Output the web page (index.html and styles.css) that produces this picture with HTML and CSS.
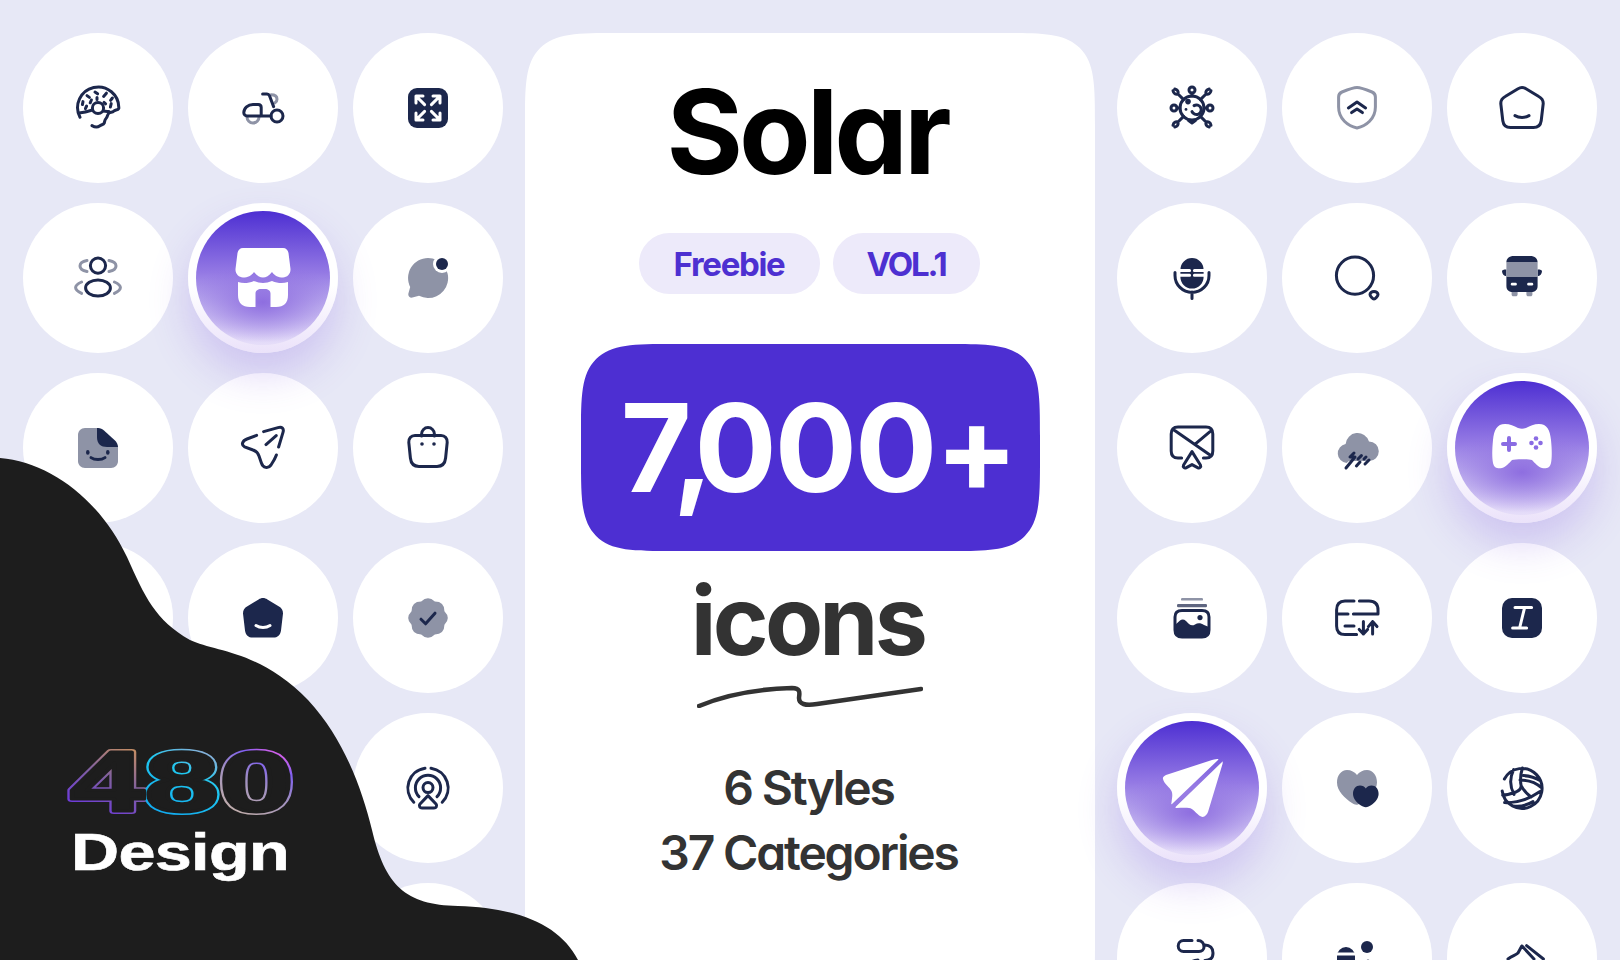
FILE: index.html
```html
<!DOCTYPE html>
<html lang="en">
<head>
<meta charset="utf-8">
<title>Solar icons</title>
<link rel="stylesheet" href="styles.css">
</head>
<body>
<main class="page">
  <section class="grid">
    <div class="cell"><svg class="ic" viewBox="0 0 24 24"><path class="s" d="M3 16.600A10.300 10.300 0 1 1 22.400 12.200c-.6 1-1.800.6-2.600 1.400-.7.8-1.600.2-2.400 1-.9.9-.4 1.600-1.300 2.500-.8.8-.7 1.500-1 2.500-.4.900-1.500.6-2.300 1.400-1 .7-2.600.5-3.800-.2"/><circle class="s" cx="12" cy="12" r="2.800"/><path class="s" d="M2.500 14.500c2-.2 4-.6 6.700-1.500M14.800 13.500c1 .3 1.700.2 2.700.2M10.500 4l1.300.9M16.200 4.600 14.800 6.200M6.500 5.800l1.200.9M4.500 8.800 4.200 10.300M8.700 8l-.6 1.400M19.200 7 18.300 8.200M18.200 11.500l.4-1.700M6.300 11 5.700 12.300M15 9.200l.8.7M11.500 6.800v1"/></svg></div>
    <div class="cell"><svg class="ic" viewBox="0 0 24 24"><path class="g" d="M4 16.500a3 3 0 0 0 6 0M16 5.400c2 0 3 1 3 2.200 0 .8-.4 1.400-1 1.800"/><path class="s" d="M16 16H4a1.600 1.600 0 0 1-1.600-1.600C2.400 12 4.500 10.200 7 10.200h2.600c1 0 1.500.5 1.500 1.500V16M11.800 5H14c.7 0 1 .3 1.300 1l2 5.300"/><circle class="s" cx="19" cy="16" r="3"/></svg></div>
    <div class="cell"><svg class="ic" viewBox="0 0 24 24"><rect class="f" x="2" y="2" width="20" height="20" rx="4.500"/><path class="w" d="M6 9.500V6h3.500M6 6l4.300 4.300M18 9.500V6h-3.500M18 6l-4.300 4.300M6 14.500V18h3.500M6 18l4.300-4.300M18 14.500V18h-3.500M18 18l-4.300-4.300"/></svg></div>

    <div class="cell"><svg class="ic" viewBox="0 0 24 24"><path class="g" d="M6.500 3.300C4.300 3.700 3 4.800 3 6s1.300 2.300 3.500 2.700M17.500 3.300C19.700 3.700 21 4.800 21 6s-1.300 2.300-3.500 2.700M3.800 14C2 14.800.8 15.700.8 16.800s1.200 2.100 3 2.900M20.200 14c1.800.8 3 1.700 3 2.800s-1.200 2.100-3 2.900"/><circle class="s" cx="12" cy="5.800" r="3.800"/><ellipse class="s" cx="12" cy="17" rx="6.200" ry="4"/></svg></div>
    <div class="cell hot"><div class="orb"><svg class="ic-lg" viewBox="-32 -32 64 64"><path class="wf" d="M-20-30H20C23-30 25-28 25.500-25L27.500-9C27.800-4 24-.5 20-.5 15-.5 12-2 9-6 6-2 3-.5 0-.5S-6-2-9-6C-12-2-15-.5-20-.5-24-.5-27.800-4-27.500-9L-25.500-25C-25-28-23-30-20-30Z"/><path class="wf" d="M-25 4C-20 5.500-15 5.500-9 3-3 5.500 3 5.500 9 3 15 5.500 20 5.500 25 4V17C25 25 21 29 13 29H7.500V15.500C7.500 12.500 5 11 2 11H-2C-5 11-7.500 12.500-7.500 15.500V29H-13C-21 29-25 25-25 17Z"/></svg></div></div>
    <div class="cell"><svg class="ic" viewBox="0 0 24 24"><path class="fg" d="M12 2a10 10 0 1 1-4.500 18.900l-3.300.9c-1.200.3-2.300-.8-2-2l.9-3.300A10 10 0 0 1 12 2Z"/><circle class="wf" cx="19" cy="5" r="4.500"/><circle class="f" cx="19" cy="5" r="3"/></svg></div>

    <div class="cell"><svg class="ic" viewBox="0 0 24 24"><path class="fg" d="M5.500 2H12l10 9.500V18.500C22 20.500 20.500 22 18.500 22H5.500C3.500 22 2 20.500 2 18.500V5.500C2 3.500 3.500 2 5.500 2Z"/><path class="f" d="M11.500 2H12C13.200 2 14.200 2.500 15 3.200L20.500 8.200C21.300 9 22 10.200 22 11.500H16.500C13.500 11.500 11.500 10 11.500 6.500Z"/><ellipse class="f" cx="6.900" cy="14.200" rx=".9" ry="1.200"/><ellipse class="f" cx="16.900" cy="14.200" rx=".9" ry="1.200"/><path class="s" d="M8.500 16.800c1.800 1.300 5.200 1.300 7 0"/></svg></div>
    <div class="cell"><svg class="ic" viewBox="0 0 24 24"><path class="s" d="M8.800 5.700 4 7.500C1.500 8.500 1 10.500 2.800 11.400L7 13C8.800 13.600 9.500 14.500 10 16L11.200 19.500C12 22 14.500 22.500 16 20.500 17 19 18 17.500 18.700 15.500M12.300 3.800 19.500 1.800C21.500 1.200 22.600 2.200 22 4.200L19.800 11.500M13.500 10.300 18.600 5.800"/></svg></div>
    <div class="cell"><svg class="ic" viewBox="0 0 24 24"><path class="s" d="M8.800 6V5a3.200 3.200 0 0 1 6.400 0v1M5.500 5.700H18.500C20.500 5.700 21.800 7.200 21.600 9.200L20.800 17C20.500 20 18.700 21.200 16.500 21.200H7.500C5.300 21.200 3.500 20 3.200 17L2.400 9.200C2.200 7.200 3.500 5.700 5.500 5.700Z"/><circle class="f" cx="9" cy="10" r=".9"/><circle class="f" cx="15" cy="10" r=".9"/></svg></div>

    <div class="cell"></div>
    <div class="cell"><svg class="ic" viewBox="0 0 24 24"><path class="f" d="M12 2c.8 0 1.500.3 2.200.7l5.800 3.500c1.400.8 2 2 2 3.500l-1 8.500c-.3 2.200-1.700 3.600-3.900 3.600H6.900c-2.200 0-3.600-1.400-3.900-3.600L2 9.700c0-1.500.6-2.700 2-3.500l5.800-3.500C10.500 2.300 11.200 2 12 2Z"/><path class="w" d="M8.500 15.800c2 1.300 5 1.300 7 0"/></svg></div>
    <div class="cell"><svg class="ic" viewBox="0 0 24 24"><path class="fg" d="M20.220 8.590Q23.600 12 20.220 15.410 20.200 20.200 15.410 20.220 12 23.600 8.590 20.220 3.800 20.200 3.780 15.410 .4 12 3.780 8.590 3.800 3.800 8.590 3.780 12 .4 15.410 3.780 20.200 3.800 20.220 8.590Z"/><path class="s" d="M8.500 12.600l2.300 2.300 4.700-5.300"/></svg></div>

    <div class="cell"></div>
    <div class="cell"></div>
    <div class="cell"><svg class="ic" viewBox="0 0 24 24"><circle class="s" cx="12" cy="11.800" r="2.500"/><path class="s" d="M12 15.800 8 20c-.8 1 0 2 1 2h6c1 0 1.800-1 1-2ZM4.900 19.100A10 10 0 0 1 10.500 2.100M13.500 2.100A10 10 0 0 1 19.100 19.100M7.500 16.300A6.300 6.300 0 1 1 16.500 16.300"/></svg></div>

    <div class="cell"></div>
    <div class="cell"></div>
    <div class="cell"></div>
  </section>

  <section class="card">
    <h1 class="title">Solar</h1>
    <div class="pills"><span class="pill pill-a">Freebie</span><span class="pill pill-b">VOL.1</span></div>
    <div class="count"><span class="seven">7</span><span class="comma">,</span><span>000+</span></div>
    <div class="icons">icons</div>
    <svg class="squiggle" viewBox="0 0 226 24"><path d="M2 22C30 10 60 5 95 4c10 0 7 7 7 10 0 6 6 8 18 6 35-5 70-10 104-15"/></svg>
    <p class="stats">6 Styles</p>
    <p class="stats">37 Categories</p>
  </section>

  <section class="grid">
    <div class="cell"><svg class="ic" viewBox="0 0 24 24"><circle class="s" cx="12" cy="12" r="6"/><circle class="s" cx="12" cy="3" r="1.500"/><circle class="s" cx="3" cy="12" r="1.500"/><circle class="s" cx="21" cy="12" r="1.500"/><path class="s" d="M12 4.500V6M4.500 12H6M18 12h1.500M7.800 7.800 5 5C5.300 3.800 4.800 2.800 3.400 2.500M5 5C3.800 5.300 2.800 4.800 2.500 3.400M16.200 7.800 19 5C18.700 3.800 19.200 2.800 20.600 2.500M19 5C20.200 5.300 21.200 4.800 21.500 3.400M7.800 16.200 5 19C3.800 18.700 2.800 19.200 2.500 20.600M5 19C5.300 20.200 4.800 21.200 3.400 21.500M16.200 16.200 19 19C20.200 18.700 21.200 19.200 21.500 20.600M19 19C18.700 20.200 19.200 21.200 20.600 21.500M10.300 18.300 12 19.500l1.700-1.200"/><circle class="f" cx="10" cy="8.800" r="1.400"/><circle class="f" cx="9" cy="12.700" r=".7"/><path class="s" d="M13 10.800a2.400 2.400 0 1 1-1 3"/></svg></div>
    <div class="cell"><svg class="ic" viewBox="0 0 24 24"><path class="g" d="M12 1.800C13 1.800 17 3 19.500 4 20.700 4.500 21.200 5.200 21.200 6.500V11.500C21.200 17.500 16.500 21 12 22 7.500 21 2.800 17.500 2.800 11.500V6.500C2.800 5.200 3.300 4.500 4.500 4 7 3 11 1.800 12 1.800Z"/><path class="s" d="M7.700 12 12 9l4.300 3M9.300 14.300 12 12.500l2.700 1.800"/></svg></div>
    <div class="cell"><svg class="ic" viewBox="0 0 24 24"><path class="s" d="M12 1.800c.8 0 1.500.3 2.200.7l6 3.600c1.500.8 2.500 2 2.400 3.800l-1 8.500c-.3 2.200-1.700 3.400-3.900 3.400H6.300c-2.200 0-3.600-1.200-3.900-3.400l-1-8.500c-.1-1.800.9-3 2.400-3.800l6-3.600C10.500 2.100 11.200 1.800 12 1.800Z"/><path class="s" d="M8.500 15.800c2 1.200 5 1.200 7 0"/></svg></div>

    <div class="cell"><svg class="ic" viewBox="0 0 24 24"><path class="f" d="M12 2a5.800 5.800 0 0 1 5.800 5.800v3.700a5.800 5.800 0 0 1-11.600 0V7.800A5.800 5.800 0 0 1 12 2Z"/><path class="w" d="M6 8.300h4.800M13.200 8.300h4.800M6 10.600h4.800M13.200 10.600h4.800"/><path class="s" d="M3.500 9.300v1.400a8.500 8.500 0 0 0 17 0V9.300M12 19v3.200"/></svg></div>
    <div class="cell"><svg class="ic" viewBox="0 0 24 24"><circle class="s" cx="11" cy="10.800" r="9.300"/><path class="s" d="M20.500 18.800c1.200 0 2 .7 2 1.500 0 .7-1.300 2.200-2 2.200s-2-1.500-2-2.200c0-.8.800-1.500 2-1.500Z"/></svg></div>
    <div class="cell"><svg class="ic" viewBox="0 0 24 24"><path class="fg" d="M6.800 19h3v1.200c0 .5-.4.9-.9.900H7.700c-.5 0-.9-.4-.9-.9ZM14.200 19h3v1.200c0 .5-.4.9-.9.900h-1.200c-.5 0-.9-.4-.9-.9Z"/><path class="f" d="M4.200 4.300C4.200 2.200 5.500 1 8 1h8c2.500 0 3.800 1.200 3.800 3.300ZM4.200 11.300h15.600V16c0 2-1.300 3-3.300 3h-9c-2 0-3.300-1-3.300-3ZM2 8.500c0-.5.700-.8 2.200-.8v3.400C3 11 2 10 2 8.500ZM22 8.500c0-.5-.7-.8-2.200-.8v3.400C21 11 22 10 22 8.500Z"/><rect class="fg" x="4.200" y="4.300" width="15.600" height="7"/><rect class="wf" x="6.400" y="14.400" width="3" height="1.300" rx=".6"/><rect class="wf" x="14.600" y="14.400" width="3" height="1.300" rx=".6"/></svg></div>

    <div class="cell"><svg class="ic" viewBox="0 0 24 24"><path class="s" d="M6.800 17H5C2.800 17 1.600 15.800 1.600 13.500V5C1.600 2.700 2.800 1.500 5 1.500H19C21.200 1.500 22.400 2.700 22.400 5V13.500C22.400 15.800 21.200 17 19 17H17.700M3 3 21 15.500M21 3.800 14 9.700M12 13.800 7.800 20.500C7.300 21.500 8.200 22.300 9.200 21.800L12 20.300 14.800 21.800C15.800 22.300 16.700 21.500 16.200 20.500Z"/></svg></div>
    <div class="cell"><svg class="ic" viewBox="0 0 24 24"><path class="fg" d="M6.800 19.500A4.800 4.800 0 0 1 6.300 10 6 6 0 0 1 18 8.700 4.900 4.900 0 0 1 18 18.500H8Z"/><path class="s" d="M10.500 14.500 8.500 16.500H11L6.500 22M14.200 15.800 12.500 17.500M13.500 19 11.700 21M18 18 16 20M16.500 16.500l-1 1"/></svg></div>
    <div class="cell hot"><div class="orb"><svg class="ic-lg" viewBox="-32 -32 64 64"><path class="wf" d="M-17-24C-12-24-8-22-4-20-1-19 1-19 4-20 8-22 12-24 17-24 25-24 28-18 29-8 30 2 30 10 29 15 28 20 24 21 20 20 16 19 13 15 10 12 7 11-7 11-10 12-13 15-16 19-20 20-24 21-28 20-29 15-30 10-30 2-29-8-28-18-25-24-17-24Z"/><path class="pur" d="M-19-4H-7M-13-10V2"/><circle class="purf" cx="14" cy="-9.500" r="2.300"/><circle class="purf" cx="14" cy="-.5" r="2.300"/><circle class="purf" cx="9.500" cy="-5" r="2.300"/><circle class="purf" cx="18.500" cy="-5" r="2.300"/></svg></div></div>

    <div class="cell"><svg class="ic" viewBox="0 0 24 24"><rect class="fg" x="6.500" y="2" width="11" height="1.300" rx=".6"/><rect class="fm" x="4.500" y="5" width="15" height="1.600" rx=".6"/><path class="f" d="M3.500 15.500 6 13.300C7 12.500 8 12.700 9 13.500L10.500 15C11.500 15.800 12.500 15.800 13.500 15.200 15 14.300 16.500 14.500 18 15.500L20.500 16.500V18C20.500 20.500 19.500 21.800 17 21.800H7C4.500 21.800 3.500 20.500 3.500 18Z"/><path class="s" d="M7 8.300H17C19.300 8.300 20.500 9.500 20.500 11.500V18C20.500 20.500 19.300 21.500 17 21.500H7C4.700 21.500 3.500 20.500 3.500 18V11.500C3.500 9.500 4.700 8.300 7 8.300Z"/><circle class="f" cx="16" cy="11.800" r="1.300"/></svg></div>
    <div class="cell"><svg class="ic" viewBox="0 0 24 24"><path class="s" d="M10.500 3.500H6C3.300 3.500 1.800 5 1.800 8V16C1.800 18.800 3.300 20.300 6 20.300H11.800M13.200 3.500H18C20.800 3.500 22.500 5 22.500 8V10H10.200M1.800 10H7.500M6 16H10.500M15.200 13.800V20M13.100 17.700 15.200 20 17.300 17.700M19.800 20V13.800M17.700 16.300 19.800 13.800 22 16.300"/></svg></div>
    <div class="cell"><svg class="ic" viewBox="0 0 24 24"><rect class="f" x="2" y="2" width="20" height="20" rx="5"/><path class="w" d="M8.500 6.800H16.800M7.300 17H14.300M13.300 6.800 10.800 17"/></svg></div>

    <div class="cell hot"><div class="orb"><svg class="ic-lg" viewBox="-32 -32 64 64"><path class="wf" d="M26-29C27-29 26-28 25.500-27.500L-20 16C-20.500 16.500-21 16-20.500 14.500-20 10-19 6-20.500 3-22-.5-28-4-29-9-29.500-11-28-12-26-13L20-28C23-29 25-29 26-29Z"/><path class="wf" d="M30-26C30.500-27 31-26 30.500-24L16 24C15 27 12 30 9 28.500 4 26 1 20-3 20-7 19.500-11 20-15.500 20-17 20-16.500 19-16 18.500L29-25C29.500-25.500 29.700-25.700 30-26Z"/></svg></div></div>
    <div class="cell"><svg class="ic" viewBox="0 0 24 24"><path class="fg" d="M2 9.200C2 5.800 4 3 7 3 9 3 11 4 12 5.500 13 4 15 3 17 3 20 3 22 5.800 22 9.200 22 13 18 17 14 19.500 12 20.800 11 20.500 9.500 19.500 6 17 2 13.500 2 9.200Z"/><path class="f" d="M10 15C10 12.500 11.500 10.800 13.500 10.800 14.800 10.800 15.800 11.400 16.400 12.200 17 11.400 18 10.800 19.300 10.800 21.300 10.800 22.800 12.500 22.800 15 22.800 17.500 20.500 20 17.800 21.300 16.800 21.800 16 21.800 15 21.300 12.300 20 10 17.500 10 15Z"/></svg></div>
    <div class="cell"><svg class="ic" viewBox="0 0 24 24"><path class="s" d="M3.200 7.500A10 10 0 1 1 2.100 13.500M7.800 2.800C5.800 7 6 11.500 8 15.200M12.200 2C11.300 5 11 8 11.500 10.500 11.800 12 10.700 13.200 9 14 6.500 15 4.300 15.500 2.300 15.500M12.800 5.800C16 6 19 7 21.200 8.300M11 8C15 8 19.300 9.500 21.900 12M3.300 19.300C9 19.500 15 18 21 13.800M7.500 21C11 21.500 15 20.300 17.500 18.800M11.800 11.200C13 13.500 14.500 15 16.500 16.500"/></svg></div>

    <div class="cell"><svg class="ic" viewBox="0 0 24 24"><path class="s" d="M12 3.300H7.800A2.700 2.700 0 0 0 7.800 8.700H15.500C17 8.700 18 7.800 18 6.500 18 4.500 16.800 3.300 15 3.300M18 5.500H18.500C21 5.500 22.500 7 22.500 9.500 22.500 12 21 13.200 18.500 13.200M12 13.800C13 13.200 14 13 15 13"/></svg></div>
    <div class="cell"><svg class="ic" viewBox="0 0 24 24"><circle class="f" cx="17" cy="6.500" r="3"/><path class="f" d="M2 11a4.500 4.500 0 0 1 9 0V15H2Z"/><path class="w" d="M2 10h9"/><circle class="f" cx="17.500" cy="13.800" r="1"/></svg></div>
    <div class="cell"><svg class="ic" viewBox="0 0 24 24"><path class="s" d="M5 12.500C7 11 9 10.500 10 9.500L11.900 6M12 6 18 12.500M14.300 5.800 22.700 12.500"/></svg></div>
  </section>
</main>

<aside class="brand">
  <svg class="blob" viewBox="0 0 600 520"><path class="blob-fill" d="M0 18C50 22 100 60 127 117 145 157 155 180 190 200 215 212 260 210 308 260 345 300 362 350 372 390 385 445 405 465 458 466 520 468 560 485 578 520H0Z"/></svg>
  <svg class="logo480" viewBox="0 0 240 84">
    <defs>
      <linearGradient id="g4" gradientUnits="userSpaceOnUse" x1="0" y1="0" x2="44" y2="-62"><stop offset="0" stop-color="#6a33e8"/><stop offset=".55" stop-color="#80609f"/><stop offset="1" stop-color="#c89060"/></linearGradient>
      <linearGradient id="g8" gradientUnits="userSpaceOnUse" x1="48" y1="0" x2="95" y2="-62"><stop offset="0" stop-color="#10a8f0"/><stop offset=".6" stop-color="#20c8f0"/><stop offset="1" stop-color="#a8a8d0"/></linearGradient>
      <linearGradient id="g0" gradientUnits="userSpaceOnUse" x1="95" y1="0" x2="145" y2="-62"><stop offset="0" stop-color="#c8b4a8"/><stop offset=".45" stop-color="#a090c0"/><stop offset=".72" stop-color="#8060f0"/><stop offset=".92" stop-color="#f060e8"/></linearGradient>
      <text id="t480" class="logo-text"><tspan class="d4">4</tspan><tspan class="d8">8</tspan><tspan class="d0">0</tspan></text>
    </defs>
    <use class="logo-outer" href="#t480" transform="translate(7 66) scale(1.56 1)"/>
    <use class="logo-inner" href="#t480" transform="translate(7 66) scale(1.56 1)"/>
  </svg>
  <div class="design">Design</div>
</aside>
</body>
</html>
```
FILE: styles.css
```css
* { box-sizing: border-box; }
html, body { margin: 0; height: 960px; overflow: hidden; }
body { background: #E7E8F6; font-family: Inter, "Liberation Sans", sans-serif; position: relative; width: 1620px; }

.page { display: flex; gap: 22px; padding: 33px 23px 0; height: 960px; overflow: hidden; }
.grid { display: grid; grid-template-columns: repeat(3, 150px); grid-auto-rows: 150px; column-gap: 15px; row-gap: 20px; flex: none; }
.cell { width: 150px; height: 150px; border-radius: 50%; background: #fff; display: flex; align-items: center; justify-content: center; }

.hot { padding: 8px; position: relative; z-index: 1; background: linear-gradient(#fff 55%, #EBE2FA 100%); box-shadow: 0 22px 40px rgba(125, 85, 225, .24); }
.orb { width: 134px; height: 134px; border-radius: 50%; display: flex; align-items: center; justify-content: center;
  background: radial-gradient(ellipse 55% 30% at 50% 68%, #8E6EE0 0%, rgba(142, 110, 224, 0) 100%), linear-gradient(#4D2FD2 0%, #9479E4 46%, #C2B4EF 72%, #E6DEF9 100%); }

.ic { width: 48px; height: 48px; display: block; }
.ic-lg { width: 64px; height: 64px; display: block; }
.s, .g, .w, .pur { fill: none; stroke-width: 1.5; stroke-linecap: round; stroke-linejoin: round; }
.s { stroke: #1C274C; }
.g { stroke: #8E93A6; }
.w { stroke: #fff; }
.f { fill: #1C274C; }
.fg { fill: #8E93A6; }
.fm { fill: #5F6680; }
.wf { fill: #fff; }
.pur { stroke: #8A6CE3; stroke-width: 4; }
.purf { fill: #8A6CE3; }

.card { flex: none; width: 570px; height: 1000px; background: #fff; border-radius: 55px; display: flex; flex-direction: column; align-items: center; font-feature-settings: "cv11" 1; }
.title { margin: 29px 6px 0 0; font-size: 117px; line-height: 140px; font-weight: 650; letter-spacing: -.035em; color: #000; }
.pills { display: flex; gap: 13px; margin: 31px 2px 0 0; }
.pill { height: 61px; border-radius: 31px; background: #EDEAFA; color: #4D30D1; font-size: 33px; font-weight: 700; display: flex; align-items: center; justify-content: center; }
.pill-a { width: 181px; letter-spacing: -.04em; }
.pill-b { width: 147px; letter-spacing: -.065em; }
.count { margin-top: 50px; width: 459px; height: 207px; border-radius: 50px; background: #4D2FD2; color: #fff; font-size: 122px; font-weight: 700; letter-spacing: -2px; display: flex; align-items: center; justify-content: center; padding-left: 17px; }
.seven { letter-spacing: -19px; }
.comma { letter-spacing: -19px; }
.icons { margin: 14px 5px 0 0; font-size: 95px; line-height: 112px; font-weight: 650; letter-spacing: -.04em; color: #333; }
.squiggle { width: 226px; height: 24px; display: block; margin-top: 7px; }
.squiggle path { fill: none; stroke: #333; stroke-width: 4.5; stroke-linecap: round; stroke-linejoin: round; }
.stats { margin: 0 3px 0 0; font-size: 48px; line-height: 65px; font-weight: 600; letter-spacing: -.045em; color: #333; }
.squiggle + .stats { margin-top: 47px; }

@supports (corner-shape: squircle) {
  .card { border-radius: 95px; corner-shape: squircle; }
  .count { border-radius: 95px; corner-shape: squircle; }
}

.brand { position: absolute; left: 0; top: 440px; width: 600px; height: 520px; z-index: 2; }
.blob { position: absolute; inset: 0; width: 600px; height: 520px; display: block; }
.blob-fill { fill: #1D1D1D; }
.logo480 { position: absolute; left: 63px; top: 305px; width: 240px; height: 84px; overflow: visible; }
.logo-text { font-family: "Liberation Sans", sans-serif; font-weight: 700; font-size: 86px; }
.logo-outer { --s4: url(#g4); --s8: url(#g8); --s0: url(#g0); fill: #1D1D1D; stroke-width: 6; stroke-linejoin: round; }
.logo-inner { --s4: #1D1D1D; --s8: #1D1D1D; --s0: #1D1D1D; fill: #1D1D1D; stroke-width: 3; stroke-linejoin: round; }
.d4 { stroke: var(--s4); }
.d8 { stroke: var(--s8); }
.d0 { stroke: var(--s0); }
.design { position: absolute; left: 71px; top: 382px; font-family: "Liberation Sans", sans-serif; font-weight: 700; font-size: 52px; line-height: 60px; color: #fff; transform: scaleX(1.28); transform-origin: left center; letter-spacing: -.01em; -webkit-text-stroke: .6px #fff; }
```
